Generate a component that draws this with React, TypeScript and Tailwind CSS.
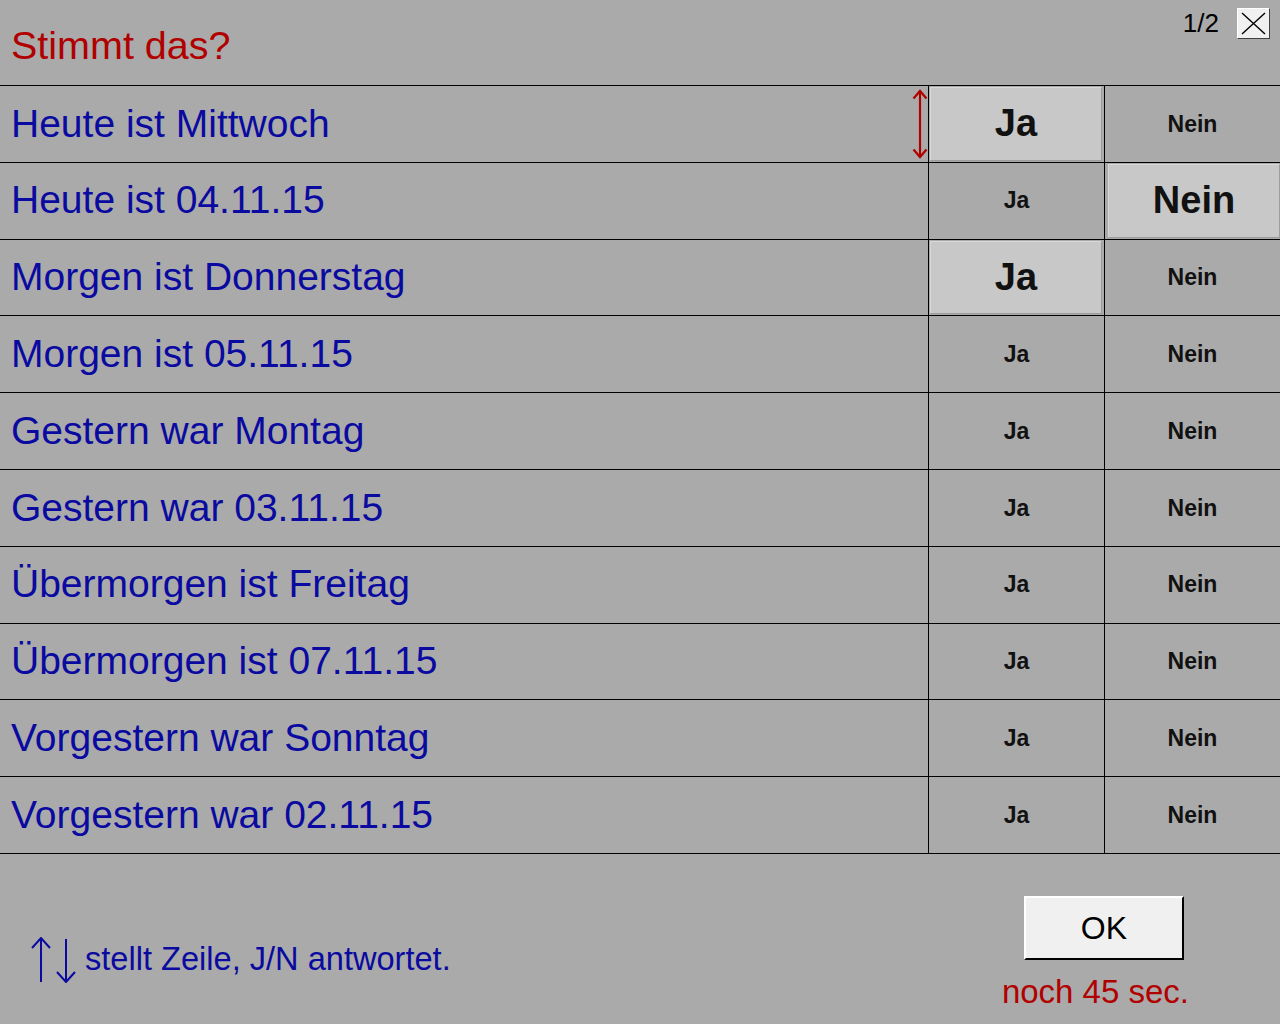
import React from "react";

type Row = { label: string; pick?: "ja" | "nein"; current?: boolean };

const rows: Row[] = [
  { label: "Heute ist Mittwoch", pick: "ja", current: true },
  { label: "Heute ist 04.11.15", pick: "nein" },
  { label: "Morgen ist Donnerstag", pick: "ja" },
  { label: "Morgen ist 05.11.15" },
  { label: "Gestern war Montag" },
  { label: "Gestern war 03.11.15" },
  { label: "Übermorgen ist Freitag" },
  { label: "Übermorgen ist 07.11.15" },
  { label: "Vorgestern war Sonntag" },
  { label: "Vorgestern war 02.11.15" },
];

function RowArrow() {
  return (
    <svg width="16" height="70" viewBox="0 0 16 70" className="mr-[0px]">
      <path d="M8 2 L8 68" stroke="#b00000" strokeWidth="2.2" fill="none" />
      <path d="M1.5 9.5 L8 2 L14.5 9.5" stroke="#b00000" strokeWidth="2.2" fill="none" />
      <path d="M1.5 60.5 L8 68 L14.5 60.5" stroke="#b00000" strokeWidth="2.2" fill="none" />
    </svg>
  );
}

function AnswerCell({ text, on, kind }: { text: string; on: boolean; kind: "ja" | "nein" }) {
  if (on) {
    return (
      <div
        className={
          kind === "ja"
            ? "w-[176px] h-full border-l border-black pl-[1px] pt-[1px] pr-[3px] pb-[2px]"
            : "w-[176px] h-full border-l border-black pl-[3px] pt-[1px] pr-[1px] pb-[2px]"
        }
      >
        <div className="h-full bg-[#c8c8c8] border-t border-l border-[#d8d8d8] shadow-[1px_1px_0_#9c9c9c] flex items-center justify-center text-[38px] font-bold text-[#111]">
          {text}
        </div>
      </div>
    );
  }
  return (
    <div className="w-[176px] h-full border-l border-black flex items-center justify-center text-[23px] font-bold text-[#111]">
      {text}
    </div>
  );
}

export default function App() {
  return (
    <div
      className="w-[1280px] h-[1024px] bg-[#aaaaaa] flex flex-col overflow-hidden"
      style={{ fontFamily: '"Liberation Sans", Arial, sans-serif' }}
    >
      {/* header */}
      <div className="h-[85px] flex justify-between">
        <div className="pl-[11px] pt-[23px] text-[39.5px] leading-[44px] text-[#b00000]">Stimmt das?</div>
        <div className="flex items-start pt-[8px] pr-[10px] gap-[18px]">
          <div className="text-[26px] leading-[30px] text-black">1/2</div>
          <div className="w-[33px] h-[31px] bg-[#f0f0f0] border-t border-l border-white border-r border-b border-r-[#404040] border-b-[#404040] flex items-center justify-center">
            <svg width="25" height="23" viewBox="0 0 25 23">
              <path d="M1 1 L24 22 M24 1 L1 22" stroke="#000" strokeWidth="1.4" fill="none" />
            </svg>
          </div>
        </div>
      </div>

      {/* table */}
      <div className="border-t border-black">
        {rows.map((r) => (
          <div key={r.label} className="h-[76.8px] border-b border-black flex box-border">
            <div className="w-[928px] h-full flex items-center justify-between pl-[11px]">
              <span className="text-[39px] text-[#0a0aa0]">{r.label}</span>
              {r.current && <RowArrow />}
            </div>
            <AnswerCell text="Ja" kind="ja" on={r.pick === "ja"} />
            <AnswerCell text="Nein" kind="nein" on={r.pick === "nein"} />
          </div>
        ))}
      </div>

      {/* footer */}
      <div className="flex-1 flex justify-between">
        <div className="flex items-start pl-[31px] pt-[83px]">
          <svg width="48" height="46" viewBox="0 0 48 46">
            <path d="M10 1 L10 45 M1 11 L10 1 L19 11" stroke="#0a0aa0" strokeWidth="2" fill="none" />
            <path d="M35 2 L35 45 M26 35 L35 45 L44 35" stroke="#0a0aa0" strokeWidth="2" fill="none" />
          </svg>
          <span className="ml-[6px] mt-[4px] text-[32.6px] leading-[36px] text-[#0a0aa0]">
            stellt Zeile, J/N antwortet.
          </span>
        </div>
        <div className="flex flex-col items-start pt-[42px] pr-[91px]">
          <button className="ml-[22px] w-[160px] h-[64px] bg-[#f0f0f0] border-t-2 border-l-2 border-white border-r-2 border-b-2 border-r-black border-b-black flex items-center justify-center text-[32px] text-black">
            OK
          </button>
          <div className="mt-[13px] text-[33px] leading-[38px] text-[#b00000]">noch 45 sec.</div>
        </div>
      </div>
    </div>
  );
}
